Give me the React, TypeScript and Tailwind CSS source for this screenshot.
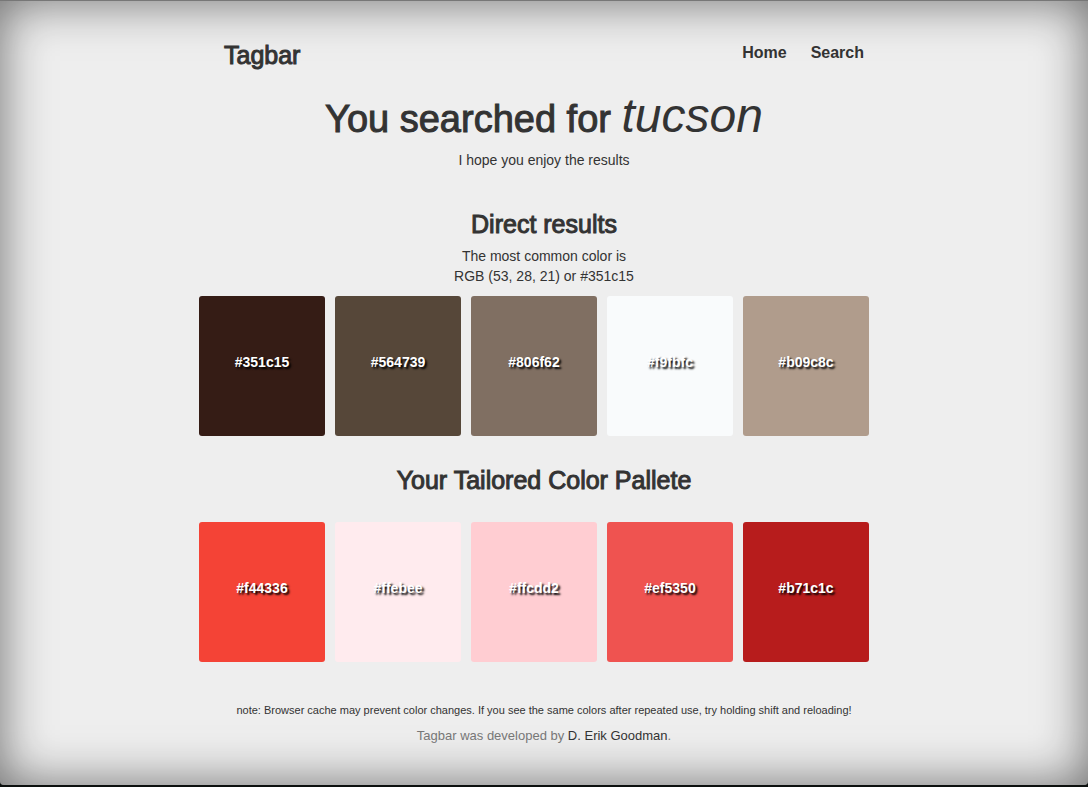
type Swatch = { hex: string; tone: string };

const direct: Swatch[] = [
  { hex: "#351c15", tone: "bg-[#351c15]" },
  { hex: "#564739", tone: "bg-[#564739]" },
  { hex: "#806f62", tone: "bg-[#806f62]" },
  { hex: "#f9fbfc", tone: "bg-[#f9fbfc]" },
  { hex: "#b09c8c", tone: "bg-[#b09c8c]" },
];

const tailored: Swatch[] = [
  { hex: "#f44336", tone: "bg-[#f44336]" },
  { hex: "#ffebee", tone: "bg-[#ffebee]" },
  { hex: "#ffcdd2", tone: "bg-[#ffcdd2]" },
  { hex: "#ef5350", tone: "bg-[#ef5350]" },
  { hex: "#b71c1c", tone: "bg-[#b71c1c]" },
];

function SwatchRow({ swatches }: { swatches: Swatch[] }) {
  return (
    <ul className="flex gap-[10px] pl-[5px] pr-[25px]">
      {swatches.map((s) => (
        <li
          key={s.hex}
          className={`flex h-[140px] flex-1 items-center justify-center rounded-[3px] pb-2 text-sm font-bold text-white [text-shadow:2px_2px_2px_#000] ${s.tone}`}
        >
          {s.hex}
        </li>
      ))}
    </ul>
  );
}

export default function App() {
  return (
    <div className="min-h-screen bg-[#0c100e] pb-[2px] font-['Liberation_Sans',Arial,sans-serif] text-sm leading-5 text-[#333]">
      <div className="flex min-h-[calc(100vh-2px)] justify-center rounded-b-[4px] border-t border-[#777] bg-[#eee] shadow-[inset_0_0_50px_rgba(0,0,0,0.55)]">
        <div className="w-full max-w-[700px] text-center">
          <header className="flex items-start justify-between px-[30px] pt-10">
            <h3 className="text-[25px] leading-7 [-webkit-text-stroke:1px_#333]">Tagbar</h3>
            <nav className="flex gap-6 text-base leading-6 font-bold">
              <a href="#home">Home</a>
              <a href="#search">Search</a>
            </nav>
          </header>

          <main>
            <h1 className="mt-5 text-[38px] leading-[54px] [-webkit-text-stroke:1px_#333]">
              You searched for <em className="text-5xl leading-[54px] italic [-webkit-text-stroke:0]">tucson</em>
            </h1>
            <p className="mt-1">I hope you enjoy the results</p>

            <h2 className="mt-10 text-[25px] leading-7 [-webkit-text-stroke:1px_#333]">Direct results</h2>
            <p className="mt-2 mb-[10px]">
              The most common color is
              <br />
              RGB (53, 28, 21) or #351c15
            </p>
            <SwatchRow swatches={direct} />

            <h2 className="mt-[30px] mb-7 text-[25px] leading-7 [-webkit-text-stroke:1px_#333]">Your Tailored Color Pallete</h2>
            <SwatchRow swatches={tailored} />
          </main>

          <footer className="pt-[38px] pb-5">
            <p className="text-[11px]">
              note: Browser cache may prevent color changes. If you see the same colors after repeated use, try holding shift and reloading!
            </p>
            <p className="mt-[6px] text-[13px] text-[#777]">
              Tagbar was developed by{" "}
              <a href="#author" className="text-[#333]">
                D. Erik Goodman
              </a>
              .
            </p>
          </footer>
        </div>
      </div>
    </div>
  );
}
